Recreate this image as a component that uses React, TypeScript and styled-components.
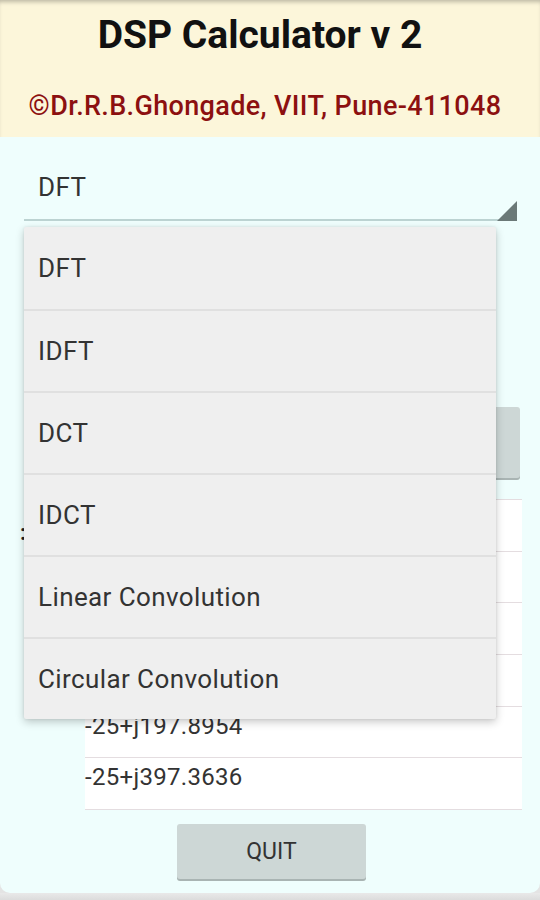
import styled, { createGlobalStyle } from "styled-components";

const GlobalStyle = createGlobalStyle`
    body {
        margin: 0;
        background: #e4e4e4;
        font-family: Roboto, "Noto Sans", "Liberation Sans", sans-serif;
    }
`

const Screen = styled.div`
    width: 540px;
    height: 900px;
    display: flex;
    flex-direction: column;
    overflow: hidden;
`

const Header = styled.div`
    height: 137px;
    flex: 0 0 137px;
    background: #fcf6da;
    box-shadow: inset 0 4px 4px -2px rgba(0,0,0,0.25);
    display: flex;
    flex-direction: column;
    align-items: center;
`

const Title = styled.div`
    margin-top: 12px;
    font-size: 39px;
    font-weight: 700;
    color: #111;
    padding-right: 20px;
`

const Credit = styled.div`
    margin-top: 32px;
    font-size: 27px;
    letter-spacing: 0.35px;
    font-weight: 500;
    color: #8c1010;
    padding-right: 10px;
`

const Body = styled.div`
    position: relative;
    flex: 1;
    background: #effefd;
    border-radius: 0 0 10px 10px;
    display: flex;
    flex-direction: column;
`

const BottomStrip = styled.div`
    flex: 0 0 7px;
    background: linear-gradient(#e9e9e9, #dcdcdc);
`

const Spinner = styled.div`
    margin: 23px 23px 0 24px;
    height: 61px;
    box-sizing: border-box;
    padding: 0 0 6px 14px;
    border-bottom: 2px solid #bcd3d2;
    position: relative;
    display: flex;
    align-items: center;
    font-size: 26px;
    letter-spacing: 0.4px;
    color: #333;
`

const Arrow = styled.div`
    position: absolute;
    right: 0;
    bottom: -2px;
    width: 0;
    height: 0;
    border-left: 20px solid transparent;
    border-bottom: 20px solid #6b7978;
`

const ButtonRow = styled.div`
    margin-top: 186px;
    display: flex;
    justify-content: flex-end;
    padding-right: 20px;
`

const GrayButton = styled.div<{ tall?: boolean }>`
    width: 189px;
    height: ${({ tall }) => (tall ? "71px" : "55px")};
    background: #cdd7d6;
    border-radius: 3px;
    box-shadow: 0 2px 0 #a9b4b3;
    display: flex;
    align-items: center;
    justify-content: center;
    font-size: 23px;
    color: #333;
`

const Results = styled.div`
    margin-top: 21px;
    display: grid;
    grid-template-columns: 85px 437px;
`

const ResultLabel = styled.div`
    padding: 21px 0 0 20px;
    font-size: 22px;
    font-weight: 700;
    color: #222;
`

const ResultList = styled.div`
    display: flex;
    flex-direction: column;
    background: #fff;
`

const ResultRow = styled.div`
    height: 51.7px;
    border-top: 1px solid #e4dde0;
    padding: 5px 0 0 0;
    box-sizing: border-box;
    font-size: 24px;
    letter-spacing: 0.3px;
    color: #333;
    &:last-child {
        border-bottom: 1px solid #e4dde0;
        height: 52.7px;
    }
`

const QuitRow = styled.div`
    margin-top: 14px;
    display: flex;
    justify-content: center;
    padding-left: 3px;
`

const Popup = styled.div`
    position: absolute;
    top: 90px;
    left: 24px;
    width: 472px;
    background: #efefef;
    border-radius: 2px;
    box-shadow: 0 3px 8px rgba(0,0,0,0.22), 0 0 3px rgba(0,0,0,0.08);
    display: flex;
    flex-direction: column;
`

const PopupItem = styled.div`
    height: 82px;
    display: flex;
    align-items: center;
    padding-left: 14px;
    font-size: 26px;
    letter-spacing: 0.4px;
    color: #333;
    & + & {
        border-top: 2px solid #e0e0e0;
        height: 80px;
    }
`

const options = ["DFT", "IDFT", "DCT", "IDCT", "Linear Convolution", "Circular Convolution"]
// rows hidden under the open menu are left blank
const results = ["", "", "", "", "-25+j197.8954", "-25+j397.3636"]

const App = () => {
    return (
        <Screen>
            <GlobalStyle />
            <Header>
                <Title>DSP Calculator v 2</Title>
                <Credit>©Dr.R.B.Ghongade, VIIT, Pune-411048</Credit>
            </Header>
            <Body>
                <Spinner>
                    DFT
                    <Arrow />
                </Spinner>
                <ButtonRow>
                    <GrayButton tall />
                </ButtonRow>
                <Results>
                    <ResultLabel>:</ResultLabel>
                    <ResultList>
                        {results.map((r, i) => (
                            <ResultRow key={i}>{r}</ResultRow>
                        ))}
                    </ResultList>
                </Results>
                <QuitRow>
                    <GrayButton>QUIT</GrayButton>
                </QuitRow>
                <Popup>
                    {options.map((o) => (
                        <PopupItem key={o}>{o}</PopupItem>
                    ))}
                </Popup>
            </Body>
            <BottomStrip />
        </Screen>
    )
}

export default App;
